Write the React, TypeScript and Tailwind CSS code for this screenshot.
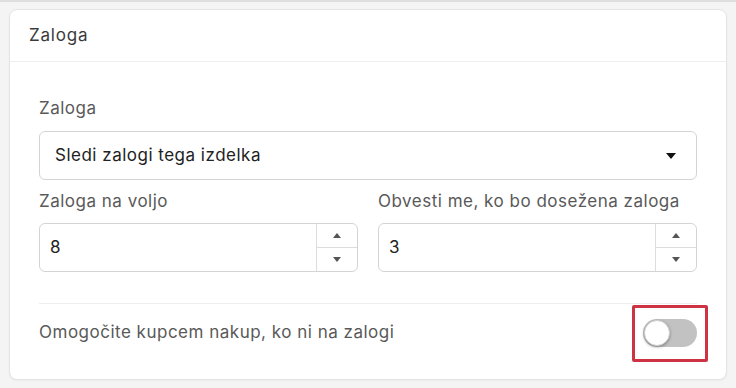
import React from "react";

function Caret({ className = "" }: { className?: string }) {
  return (
    <svg width="10" height="6" viewBox="0 0 10 6" className={className}>
      <path d="M0 0 L10 0 L5 6 Z" fill="currentColor" />
    </svg>
  );
}

function NumberInput({ value }: { value: string }) {
  return (
    <div className="flex h-[49px] rounded-md border border-[#d4d4d4] bg-white overflow-hidden">
      <div className="flex flex-1 items-center pl-[10px] text-[17px] text-[#222]">{value}</div>
      <div className="flex w-[41px] flex-col border-l border-[#dcdcdc]">
        <div className="flex flex-1 items-center justify-center border-b border-[#dcdcdc] text-[#555]">
          <svg width="8" height="5" viewBox="0 0 8 5"><path d="M0 5 L8 5 L4 0 Z" fill="currentColor" /></svg>
        </div>
        <div className="flex flex-1 items-center justify-center text-[#555]">
          <svg width="8" height="5" viewBox="0 0 8 5"><path d="M0 0 L8 0 L4 5 Z" fill="currentColor" /></svg>
        </div>
      </div>
    </div>
  );
}

export default function App() {
  return (
    <div
      className="h-[388px] w-[736px] overflow-hidden border-t-2 border-[#dedede] bg-[#f4f4f4] px-[9px] pt-[7px] tracking-[0.5px]"
      style={{ fontFamily: "Inter, 'Open Sans', sans-serif" }}
    >
      <div className="rounded-lg border border-[#e4e4e4] bg-white shadow-[0_1px_2px_rgba(0,0,0,0.04)]">
        <div className="flex h-[52px] items-center border-b border-[#eeeeee] px-[19px] text-[17px] tracking-[0.8px] text-[#3a3a3a]">
          Zaloga
        </div>
        <div className="px-[29px] pt-[34px] pb-[17px]">
          <div className="mb-[11px] text-[17px] leading-[24px] text-[#595959]">Zaloga</div>
          <div className="flex h-[49px] items-center justify-between rounded-md border border-[#d4d4d4] pl-[15px] pr-[20px] text-[17px] text-[#222]">
            <span>Sledi zalogi tega izdelka</span>
            <Caret className="text-[#111]" />
          </div>
          <div className="mt-[9px] grid grid-cols-2 gap-[20px]">
            <div>
              <div className="mb-[10px] text-[17px] leading-[24px] text-[#595959]">Zaloga na voljo</div>
              <NumberInput value="8" />
            </div>
            <div>
              <div className="mb-[10px] text-[17px] leading-[24px] whitespace-nowrap text-[#595959]">Obvesti me, ko bo dosežena zaloga</div>
              <NumberInput value="3" />
            </div>
          </div>
          <div className="mt-[31px] border-t border-[#eeeeee]" />
          <div className="relative flex h-[58px] items-center justify-between">
            <span className="text-[17px] text-[#595959]">Omogočite kupcem nakup, ko ni na zalogi</span>
            <div className="relative mr-0 h-[28px] w-[54px] rounded-full bg-[#c2c2c2]">
              <div className="absolute left-[1px] top-[1px] h-[26px] w-[26px] rounded-full border border-[#d0d0d0] bg-white shadow-[0_1px_3px_rgba(0,0,0,0.35)]" />
            </div>
            <div className="pointer-events-none absolute right-[-11px] top-[1px] h-[57px] w-[76px] rounded-[2px] border-[3px] border-[#cd3343]" />
          </div>
        </div>
      </div>
    </div>
  );
}
